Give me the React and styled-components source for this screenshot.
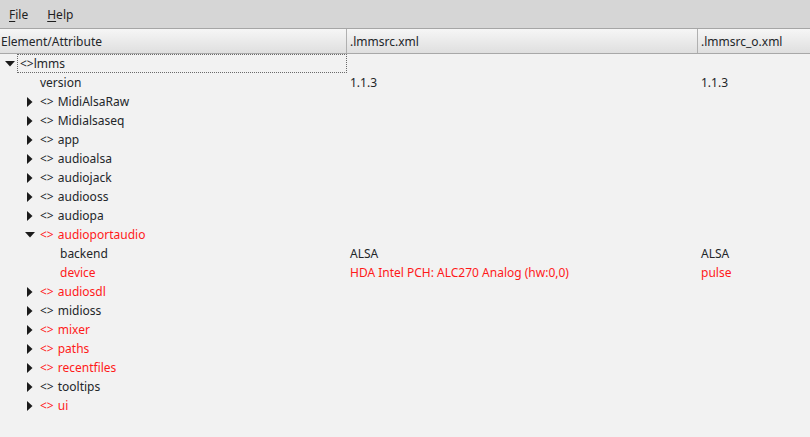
import React from "react";
import styled, { createGlobalStyle } from "styled-components";

const Global = createGlobalStyle`
  html, body { margin: 0; padding: 0; background: #f2f2f2; }
  body { font-family: "Noto Sans", "Open Sans", sans-serif; font-size: 12px; color: #232629; }
  #root { width: 810px; height: 437px; overflow: hidden; }
`;

const Window = styled.div`
  width: 810px;
  height: 437px;
  display: flex;
  flex-direction: column;
  background: #f2f2f2;
`;

const MenuBar = styled.div`
  height: 28px;
  background: #d6d6d6;
  border-bottom: 1px solid #a6a6a6;
  display: flex;
  align-items: center;
  padding-left: 9px;
  gap: 19px;
  box-sizing: content-box;
`;

const MenuItem = styled.span`
  font-size: 12px;
  color: #1f1f1f;
  & u { text-decoration-thickness: 1px; text-underline-offset: 2px; }
`;

const Header = styled.div`
  display: grid;
  grid-template-columns: 347px 351px 1fr;
  height: 24px;
  background: linear-gradient(#f6f6f6, #dfdfdf);
  border-bottom: 1px solid #a8a8a8;
`;

const HeaderCell = styled.div`
  display: flex;
  align-items: center;
  padding-left: ${(p) => p.$pad}px;
  border-right: ${(p) => (p.$last ? "none" : "1px solid #b0b0b0")};
  color: #232629;
  white-space: nowrap;
`;

const Body = styled.div`
  display: flex;
  flex-direction: column;
`;

const Row = styled.div`
  display: grid;
  grid-template-columns: 347px 351px 1fr;
  height: 19px;
  color: ${(p) => (p.$red ? "#ff1a1a" : "#232629")};
`;

const TreeCell = styled.div`
  display: flex;
  align-items: center;
  padding-left: ${(p) => p.$indent}px;
  white-space: nowrap;
`;

const Focus = styled.div`
  display: flex;
  align-items: center;
  flex: 1;
  align-self: stretch;
  border: 1px dotted #6a6a6a;
  margin-left: -3px;
  padding-left: 2px;
  box-sizing: border-box;
`;

const Arrow = styled.span`
  width: 20px;
  flex: 0 0 20px;
  display: flex;
  align-items: center;
  justify-content: ${(p) => (p.$root ? "flex-start" : "center")};
  padding-left: ${(p) => (p.$root ? 5 : 0)}px;
  box-sizing: border-box;
`;

const ValueCell = styled.div`
  display: flex;
  align-items: center;
  padding-left: ${(p) => p.$pad}px;
  white-space: nowrap;
`;

const Tag = styled.span`
  margin-right: ${(p) => (p.$tight ? 0 : 4)}px;
`;

const Down = () => (
  <svg width="10" height="6" viewBox="0 0 10 6">
    <path d="M0 0 H10 L5 5.5 Z" fill="#1b1b1b" />
  </svg>
);
const Right = () => (
  <svg width="6" height="10" viewBox="0 0 6 10">
    <path d="M0 0 V10 L5.5 5 Z" fill="#1b1b1b" />
  </svg>
);

const rows = [
  { kind: "el", name: "MidiAlsaRaw" },
  { kind: "el", name: "Midialsaseq" },
  { kind: "el", name: "app" },
  { kind: "el", name: "audioalsa" },
  { kind: "el", name: "audiojack" },
  { kind: "el", name: "audiooss" },
  { kind: "el", name: "audiopa" },
  { kind: "el", name: "audioportaudio", red: true, open: true },
  { kind: "attr", depth: 2, name: "backend", a: "ALSA", b: "ALSA" },
  { kind: "attr", depth: 2, name: "device", red: true, a: "HDA Intel PCH: ALC270 Analog (hw:0,0)", b: "pulse" },
  { kind: "el", name: "audiosdl", red: true },
  { kind: "el", name: "midioss" },
  { kind: "el", name: "mixer", red: true },
  { kind: "el", name: "paths", red: true },
  { kind: "el", name: "recentfiles", red: true },
  { kind: "el", name: "tooltips" },
  { kind: "el", name: "ui", red: true },
];

export default function App() {
  return (
    <Window>
      <Global />
      <MenuBar>
        <MenuItem><u>F</u>ile</MenuItem>
        <MenuItem><u>H</u>elp</MenuItem>
      </MenuBar>
      <Header>
        <HeaderCell $pad={1}>Element/Attribute</HeaderCell>
        <HeaderCell $pad={3}>.lmmsrc.xml</HeaderCell>
        <HeaderCell $pad={3} $last>.lmmsrc_o.xml</HeaderCell>
      </Header>
      <Body>
        <Row>
          <TreeCell $indent={0}>
            <Arrow $root><Down /></Arrow>
            <Focus><Tag $tight>&lt;&gt;</Tag>lmms</Focus>
          </TreeCell>
          <ValueCell $pad={3} />
          <ValueCell $pad={3} />
        </Row>
        <Row>
          <TreeCell $indent={40}>version</TreeCell>
          <ValueCell $pad={3}>1.1.3</ValueCell>
          <ValueCell $pad={3}>1.1.3</ValueCell>
        </Row>
        {rows.map((r) =>
          r.kind === "el" ? (
            <Row key={r.name} $red={r.red}>
              <TreeCell $indent={20}>
                <Arrow>{r.open ? <Down /> : <Right />}</Arrow>
                <Tag>&lt;&gt;</Tag>
                {r.name}
              </TreeCell>
              <ValueCell $pad={3} />
              <ValueCell $pad={3} />
            </Row>
          ) : (
            <Row key={r.name} $red={r.red}>
              <TreeCell $indent={60}>{r.name}</TreeCell>
              <ValueCell $pad={3}>{r.a}</ValueCell>
              <ValueCell $pad={3}>{r.b}</ValueCell>
            </Row>
          )
        )}
      </Body>
    </Window>
  );
}
